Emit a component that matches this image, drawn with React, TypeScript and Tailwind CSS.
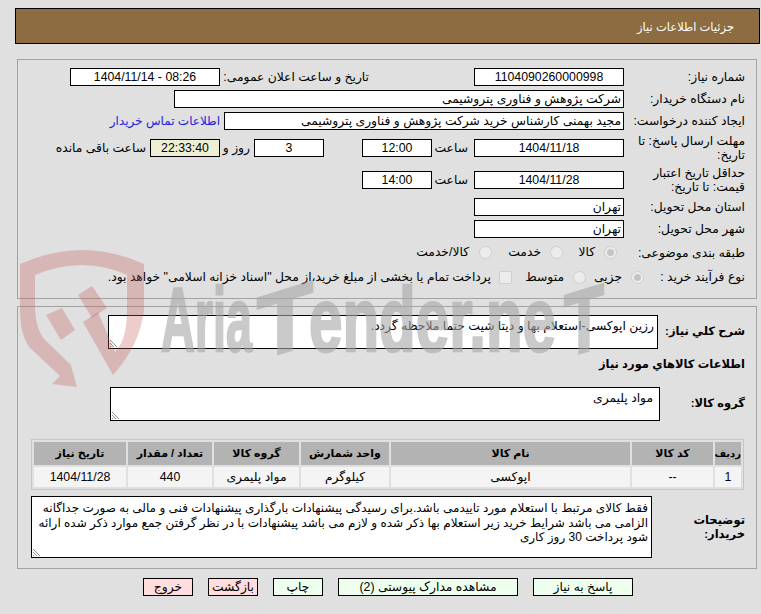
import React from "react";

const font = "font-['Liberation_Sans','DejaVu_Sans',sans-serif]";

function Box({ w, children, bg = "bg-white", align = "text-center" }: { w: string; children?: React.ReactNode; bg?: string; align?: string }) {
  return (
    <div className={`${w} ${bg} ${align} h-[18px] shrink-0 border border-black px-[2px] leading-[16px] overflow-hidden whitespace-nowrap`}>
      {children}
    </div>
  );
}

function Label({ children }: { children: React.ReactNode }) {
  return <div className="w-[121px] shrink-0 leading-[14px]">{children}</div>;
}

function Radio({ on }: { on?: boolean }) {
  return (
    <span className="flex h-[13px] w-[13px] shrink-0 items-center justify-center rounded-full border border-[#cfcfcf] bg-[#ececec]">
      {on ? <span className="h-[7px] w-[7px] rounded-full bg-[#c4c4c4]" /> : null}
    </span>
  );
}

function Area({ cls, children }: { cls: string; children?: React.ReactNode }) {
  return (
    <div className={`${cls} relative shrink-0 border border-black bg-white`}>
      {children}
      <svg className="absolute bottom-0 left-0" width="9" height="9" viewBox="0 0 9 9">
        <path d="M1 1L8 8M1 4L5 8M1 7L2 8" stroke="#777" strokeWidth="0.8" fill="none" />
      </svg>
    </div>
  );
}

const headers = [
  ["w-[26px] text-[10px]", "ردیف"],
  ["w-[81px] text-[11px]", "کد کالا"],
  ["w-[239px] text-[11px]", "نام کالا"],
  ["w-[88px] text-[11px]", "واحد شمارش"],
  ["w-[85px] text-[11px]", "گروه کالا"],
  ["w-[84px] text-[11px]", "تعداد / مقدار"],
  ["w-[92px] text-[11px]", "تاریخ نیاز"],
];
const cells = ["1", "--", "اپوکسی", "کیلوگرم", "مواد پلیمری", "440", "1404/11/28"];

const greenBtn = "h-[18px] border border-black bg-[#eeffee] text-center leading-[16px]";
const redBtn = "h-[18px] border border-black bg-[#ffdddd] text-center leading-[16px]";

export default function App() {
  return (
    <div dir="rtl" className={`${font} relative h-[614px] w-[761px] overflow-hidden bg-[#e0e0e0] pt-[8px] text-[12.3px] text-black`}>
      <div className="ml-[15px] mr-[1px] flex h-[36px] items-center border border-black bg-[#8c6c40] pr-[25px] pt-[3px] text-[11.5px] text-white">
        جزئیات اطلاعات نیاز
      </div>

      <div className="ml-[17px] mr-[4px] mt-[15px] h-[240px] border border-[#a3a3a3] pr-[11px] pt-[8px]">
        <div className="flex flex-col gap-[4px]">
          <div className="flex h-[18px] items-center">
            <Label>شماره نیاز:</Label>
            <Box w="w-[150px]">1104090260000998</Box>
            <div className="mr-[105px] w-[149px] shrink-0 whitespace-nowrap">تاریخ و ساعت اعلان عمومی:</div>
            <Box w="w-[150px]">08:26 - 1404/11/14</Box>
          </div>
          <div className="flex h-[18px] items-center">
            <Label>نام دستگاه خریدار:</Label>
            <Box w="w-[450px]" align="text-right">شرکت پژوهش و فناوری پتروشیمی</Box>
          </div>
          <div className="flex h-[18px] items-center">
            <Label>ایجاد کننده درخواست:</Label>
            <Box w="w-[400px]" align="text-right">مجید بهمنی کارشناس خرید شرکت پژوهش و فناوری پتروشیمی</Box>
            <div className="mr-[4px] whitespace-nowrap text-[12px] text-[#2222dd]">اطلاعات تماس خریدار</div>
          </div>
          <div className="flex h-[28px] items-center">
            <Label>مهلت ارسال پاسخ: تا تاریخ:</Label>
            <Box w="w-[150px]">1404/11/18</Box>
            <div className="w-[42px] shrink-0 pr-[6px]">ساعت</div>
            <Box w="w-[70px]">12:00</Box>
            <div className="w-[38px] shrink-0" />
            <Box w="w-[70px]">3</Box>
            <div className="w-[34px] shrink-0 pr-[4px]">روز و</div>
            <Box w="w-[70px]" bg="bg-[#eeeed2]">22:33:40</Box>
            <div className="mr-[4px] whitespace-nowrap">ساعت باقی مانده</div>
          </div>
          <div className="flex h-[28px] items-center">
            <Label>حداقل تاریخ اعتبار قیمت: تا تاریخ:</Label>
            <Box w="w-[150px]">1404/11/28</Box>
            <div className="w-[42px] shrink-0 pr-[6px]">ساعت</div>
            <Box w="w-[70px]">14:00</Box>
          </div>
          <div className="flex h-[18px] items-center">
            <Label>استان محل تحویل:</Label>
            <Box w="w-[150px]" align="text-right">تهران</Box>
          </div>
          <div className="flex h-[18px] items-center">
            <Label>شهر محل تحویل:</Label>
            <Box w="w-[150px]" align="text-right">تهران</Box>
          </div>
          <div className="flex h-[21px] items-center">
            <Label>طبقه بندی موضوعی:</Label>
            <div className="mr-[7px]"><Radio on /></div>
            <div className="mr-[9px] w-[32px]">کالا</div>
            <Radio />
            <div className="mr-[9px] w-[49px]">خدمت</div>
            <Radio />
            <div className="mr-[10px] whitespace-nowrap">کالا/خدمت</div>
          </div>
          <div className="flex h-[21px] items-center">
            <div className="w-[101px] shrink-0">نوع فرآیند خرید :</div>
            <Radio on />
            <div className="mr-[9px] w-[36px]">جزیی</div>
            <Radio />
            <div className="mr-[9px] w-[52px]">متوسط</div>
            <span className="h-[13px] w-[13px] shrink-0 rounded-[2px] border border-[#cfcfcf] bg-[#ececec]" />
            <div className="mr-[8px] whitespace-nowrap">پرداخت تمام یا بخشی از مبلغ خرید،از محل "اسناد خزانه اسلامی" خواهد بود.</div>
          </div>
        </div>
      </div>

      <div className="ml-[17px] mr-[4px] mt-[7px] h-[263px] border border-[#a3a3a3] pr-[11px] pt-[8px]">
        <div className="flex h-[34px] items-center">
          <div className="w-[87px] shrink-0 whitespace-nowrap text-[11.5px] font-bold">شرح کلي نیاز:</div>
          <Area cls="h-[34px] w-[550px] pr-[3px] pt-[3px] leading-[14px]">رزین اپوکسی-استعلام بها و دیتا شیت حتما ملاحظه گردد.</Area>
        </div>
        <div className="mt-[7px] text-[11.5px] font-bold leading-[16px]">اطلاعات کالاهاي مورد نیاز</div>
        <div className="mt-[15px] flex h-[34px] items-center">
          <div className="w-[85px] shrink-0 whitespace-nowrap text-[11.5px] font-bold">گروه کالا:</div>
          <Area cls="h-[34px] w-[550px] pr-[6px] pt-[3px] leading-[14px]">مواد پلیمری</Area>
        </div>
        <table className="mr-[1px] mt-[18px] w-[713px] table-fixed border-separate border-spacing-[2px] border border-[#c6c6c6] text-center">
          <thead>
            <tr>
              {headers.map(([w, t]) => (
                <th key={t} className={`${w} h-[23px] whitespace-nowrap bg-[#b3b3b3] p-0 font-bold`}>{t}</th>
              ))}
            </tr>
          </thead>
          <tbody>
            <tr>
              {cells.map((c, i) => (
                <td key={i} className="h-[20px] bg-[#f4f4f4] p-0">{c}</td>
              ))}
            </tr>
          </tbody>
        </table>
        <div className="mt-[6px] flex h-[62px] items-center">
          <div className="w-[93px] shrink-0 text-[11.5px] font-bold leading-[14px]">توضیحات خریدار:</div>
          <Area cls="h-[62px] w-[621px] pr-[3px] pl-[3px] pt-[4px] text-[12px] leading-[14.5px]">
            فقط کالای مرتبط با استعلام مورد تاییدمی باشد.برای رسیدگی پیشنهادات بارگذاری پیشنهادات فنی و مالی به صورت جداگانه الزامی می باشد شرایط خرید زیر استعلام بها ذکر شده و لازم می باشد پیشنهادات با در نظر گرفتن جمع موارد ذکر شده ارائه شود پرداخت 30 روز کاری
          </Area>
        </div>
      </div>

      <div className="mr-[128px] mt-[9px] flex gap-[15px]">
        <div className={`${greenBtn} w-[100px]`}>پاسخ به نیاز</div>
        <div className={`${greenBtn} w-[180px]`}>مشاهده مدارک پیوستی (2)</div>
        <div className={`${greenBtn} w-[50px]`}>چاپ</div>
        <div className={`${redBtn} w-[50px]`}>بازگشت</div>
        <div className={`${redBtn} w-[50px]`}>خروج</div>
      </div>

      <svg className="pointer-events-none absolute left-0 top-0" width="761" height="614" viewBox="0 0 761 614">
        <g fill="rgb(194,87,87)" fillOpacity="0.3">
          <path d="M20 264Q83 236 144 264L144 310Q140 345 113 375L83 322L98 312L115 352Q127 340 127 310L127 275Q83 255 35 275L35 310Q36 330 45 340L70 364L70 362L77 387L52 384L60 376L30 348Q20 335 20 310Z" />
          <path d="M46 315L62 308L75 330L61 340Z" />
          <path d="M78 295L92 286L107 308L92 318Z" />
        </g>
        <g opacity="0.6" fill="rgb(167,167,167)" stroke="rgb(167,167,167)" strokeWidth="2.5" fontFamily="'Liberation Sans', sans-serif" fontWeight="700" direction="ltr">
          <text x="161" y="351" fontSize="90" textLength="91" lengthAdjust="spacingAndGlyphs">Aria</text>
          <text transform="translate(285 352) skewY(-17)" x="0" y="0" textAnchor="middle" fontSize="90" textLength="56" lengthAdjust="spacingAndGlyphs">T</text>
          <text x="309" y="351" fontSize="90" textLength="247" lengthAdjust="spacingAndGlyphs">ender.ne</text>
          <text transform="translate(584 352) skewY(-17)" x="0" y="0" textAnchor="middle" fontSize="90" textLength="40" lengthAdjust="spacingAndGlyphs">T</text>
        </g>
      </svg>
    </div>
  );
}
